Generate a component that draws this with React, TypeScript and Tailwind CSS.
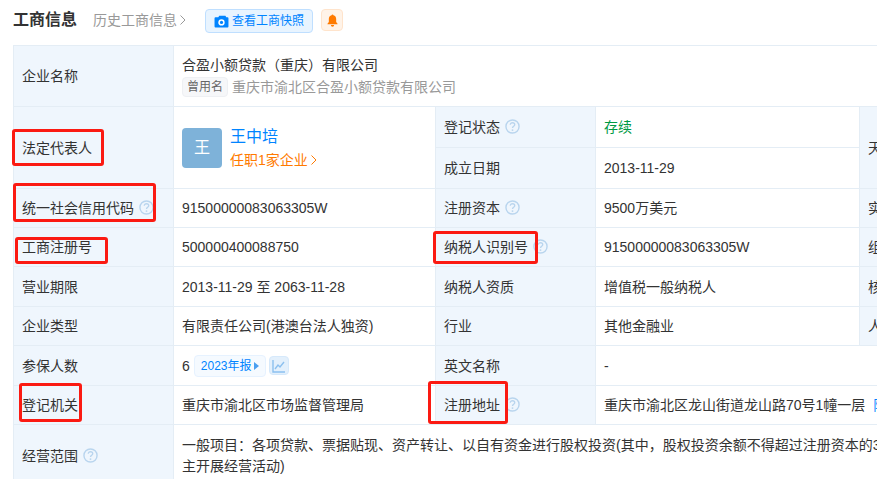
import type { ReactNode } from 'react';

const sans = 'font-["Liberation_Sans","Noto_Sans_CJK_SC",sans-serif]';
const labelCell = 'border border-[#e4edf5] bg-[#eff6fd] px-2 text-left font-normal text-[#333]';
const valueCell = 'border border-[#e4edf5] bg-white px-2 text-left font-normal text-[#333]';

function Help() {
  return (
    <svg viewBox="0 0 16 16" className="ml-[5px] inline-block h-[15px] w-[15px] align-[-2px]" fill="none">
      <circle cx="8" cy="8" r="7" stroke="#b9d5ee" strokeWidth="1.5" />
      <path d="M5.6 6.2c0-1.400 1.100-2.200 2.400-2.200s2.400.8 2.400 2c0 1.700-2.400 1.800-2.400 3.600" stroke="#b9d5ee" strokeWidth="1.400" />
      <circle cx="8" cy="11.800" r="1" fill="#b9d5ee" />
    </svg>
  );
}

// red marks drawn over the table
function Mark({ className }: { className: string }) {
  return <div className={`absolute rounded-[3px] border-[3px] border-[#fb1a12] ${className}`} />;
}

function Label({ children, help, rowSpan }: { children: ReactNode; help?: boolean; rowSpan?: number }) {
  return (
    <th className={labelCell} rowSpan={rowSpan}>
      {children}
      {help && <Help />}
    </th>
  );
}

export default function App() {
  return (
    <div className={`relative h-[479px] w-[877px] overflow-hidden bg-white text-sm ${sans}`}>
      {/* Header */}
      <div className="flex h-[45px] items-start pl-[13px] pt-[9px]">
        <h1 className="text-base leading-[22px] font-bold text-[#333]">工商信息</h1>
        <span className="ml-4 flex h-[22px] items-center text-[#999]">
          历史工商信息
          <svg viewBox="0 0 8 12" className="ml-0.5 h-3 w-2" fill="none" stroke="#999" strokeWidth="1">
            <path d="M1.500 1.500 6 6l-4.500 4.500" />
          </svg>
        </span>
        <button className="ml-[18px] flex h-6 w-[108px] items-center gap-[3px] rounded-sm border border-[#bfdfff] bg-[#e8f4ff] pl-2 text-xs text-[#0084ff]">
          <svg viewBox="0 0 16 14" className="h-[13px] w-[15px]">
            <path d="M1.500 2.500h3L5.600.8h6.600l1 1.700h1.300c.6 0 1 .4 1 1v9c0 .6-.4 1-1 1h-13c-.6 0-1-.4-1-1v-9c0-.6.4-1 1-1z" fill="#0084ff" />
            <circle cx="8" cy="8" r="3.400" fill="#fff" />
            <circle cx="8" cy="8" r="1.700" fill="#0084ff" />
          </svg>
          查看工商快照
        </button>
        <span className="ml-2 flex h-[22px] w-[22px] items-center justify-center rounded-sm border border-[#ffe4cc] bg-[#fff3e8]">
          <svg viewBox="0 0 12 14" className="h-[13px] w-[11px]" fill="#ff7a00">
            <path d="M6 .5c.6 0 1 .4 1 .9 2 .5 3 2 3 4v3.200l1.500 2v.6H.5v-.6l1.500-2V5.400c0-2 1-3.500 3-4 0-.5.400-.9 1-.9z" />
            <path d="M4.200 12h3.600a1.800 1.800 0 0 1-3.600 0z" />
          </svg>
        </span>
      </div>

      {/* Info table */}
      <table className="ml-[13px] w-[1100px] table-fixed border-collapse">
        <colgroup>
          <col className="w-[160px]" />
          <col className="w-[262px]" />
          <col className="w-[160px]" />
          <col className="w-[264px]" />
          <col className="w-[160px]" />
          <col />
        </colgroup>
        <tbody>
          <tr className="h-[61px]">
            <Label>企业名称</Label>
            <td className={valueCell} colSpan={5}>
              <div className="leading-5">合盈小额贷款（重庆）有限公司</div>
              <div className="mt-0.5 flex items-center leading-5 text-[#999]">
                <span className="mr-1 rounded-sm border border-[#eef0f3] bg-[#f6f7f9] px-1 text-xs leading-[18px] text-[#666]">曾用名</span>
                重庆市渝北区合盈小额贷款有限公司
              </div>
            </td>
          </tr>
          <tr className="h-[41px]">
            <Label rowSpan={2}>法定代表人</Label>
            <td className={valueCell} rowSpan={2}>
              <div className="flex items-center">
                <div className="flex h-10 w-10 items-center justify-center rounded bg-[#7eb2d9] text-base text-white">王</div>
                <div className="ml-2">
                  <div className="text-base leading-6 text-[#0084ff]">王中培</div>
                  <div className="my-px flex items-center leading-5 text-[#ff7a00]">
                    任职1家企业
                    <svg viewBox="0 0 8 12" className="ml-0.5 h-3 w-2" fill="none" stroke="#ff7a00" strokeWidth="1">
                      <path d="M1.500 1.500 6 6l-4.500 4.500" />
                    </svg>
                  </div>
                </div>
              </div>
            </td>
            <Label help>登记状态</Label>
            <td className={`${valueCell} !text-[#009944]`}>存续</td>
            <Label rowSpan={2}>天眼评分</Label>
            <td className={valueCell} rowSpan={2} />
          </tr>
          <tr className="h-[41px]">
            <Label>成立日期</Label>
            <td className={valueCell}>2013-11-29</td>
          </tr>
          <tr className="h-[39px]">
            <Label help>统一社会信用代码</Label>
            <td className={valueCell}>91500000083063305W</td>
            <Label help>注册资本</Label>
            <td className={valueCell}>9500万美元</td>
            <Label>实缴资本</Label>
            <td className={valueCell}>-</td>
          </tr>
          <tr className="h-[39px]">
            <Label>工商注册号</Label>
            <td className={valueCell}>500000400088750</td>
            <Label help>纳税人识别号</Label>
            <td className={valueCell}>91500000083063305W</td>
            <Label>组织机构代码</Label>
            <td className={valueCell}>08306330-5</td>
          </tr>
          <tr className="h-[40px]">
            <Label>营业期限</Label>
            <td className={valueCell}>2013-11-29 至 2063-11-28</td>
            <Label>纳税人资质</Label>
            <td className={valueCell}>增值税一般纳税人</td>
            <Label>核准日期</Label>
            <td className={valueCell}>2023-06-01</td>
          </tr>
          <tr className="h-[39px]">
            <Label>企业类型</Label>
            <td className={valueCell}>有限责任公司(港澳台法人独资)</td>
            <Label>行业</Label>
            <td className={valueCell}>其他金融业</td>
            <Label>人员规模</Label>
            <td className={valueCell}>-</td>
          </tr>
          <tr className="h-[40px]">
            <Label>参保人数</Label>
            <td className={valueCell}>
              <div className="flex items-center">
                6
                <span className="ml-1 flex h-[22px] items-center rounded-sm border border-[#e6f2ff] bg-[#f5faff] px-1.5 text-xs text-[#0084ff]">
                  2023年报
                  <svg viewBox="0 0 5 8" className="ml-0.5 h-2 w-[5px]" fill="#4a9ff0">
                    <path d="M0 0l5 4-5 4z" />
                  </svg>
                </span>
                <span className="ml-[3px] flex h-[19px] w-5 items-center justify-center rounded-sm border border-[#d6e9fb] bg-[#e3f0fc]">
                  <svg viewBox="0 0 14 14" className="h-[14px] w-[14px]" fill="none" stroke="#8cc0ef" strokeWidth="1.400">
                    <path d="M1 1v12h12M3 10l3-4 2 2 4-5" />
                  </svg>
                </span>
              </div>
            </td>
            <Label>英文名称</Label>
            <td className={valueCell} colSpan={3}>-</td>
          </tr>
          <tr className="h-[39px]">
            <Label>登记机关</Label>
            <td className={valueCell}>重庆市渝北区市场监督管理局</td>
            <Label help>注册地址</Label>
            <td className={valueCell} colSpan={3}>
              重庆市渝北区龙山街道龙山路70号1幢一层<span className="ml-2 text-[#0084ff]">附近企业</span>
            </td>
          </tr>
          <tr className="h-[62px]">
            <Label help>经营范围</Label>
            <td className={`${valueCell} leading-[21px] whitespace-nowrap`} colSpan={5}>
              一般项目：各项贷款、票据贴现、资产转让、以自有资金进行股权投资(其中，股权投资余额不得超过注册资本的30%)，依法自
              <br />
              主开展经营活动)
            </td>
          </tr>
        </tbody>
      </table>

      <Mark className="left-[12px] top-[129px] h-[37px] w-[92px]" />
      <Mark className="left-[13px] top-[183px] h-[39px] w-[143px]" />
      <Mark className="left-[15px] top-[237px] h-[27px] w-[93px]" />
      <Mark className="left-[433px] top-[231px] h-[33px] w-[105px]" />
      <Mark className="left-[19px] top-[383px] h-[39px] w-[63px]" />
      <Mark className="left-[428px] top-[381px] h-[43px] w-[80px]" />
    </div>
  );
}
